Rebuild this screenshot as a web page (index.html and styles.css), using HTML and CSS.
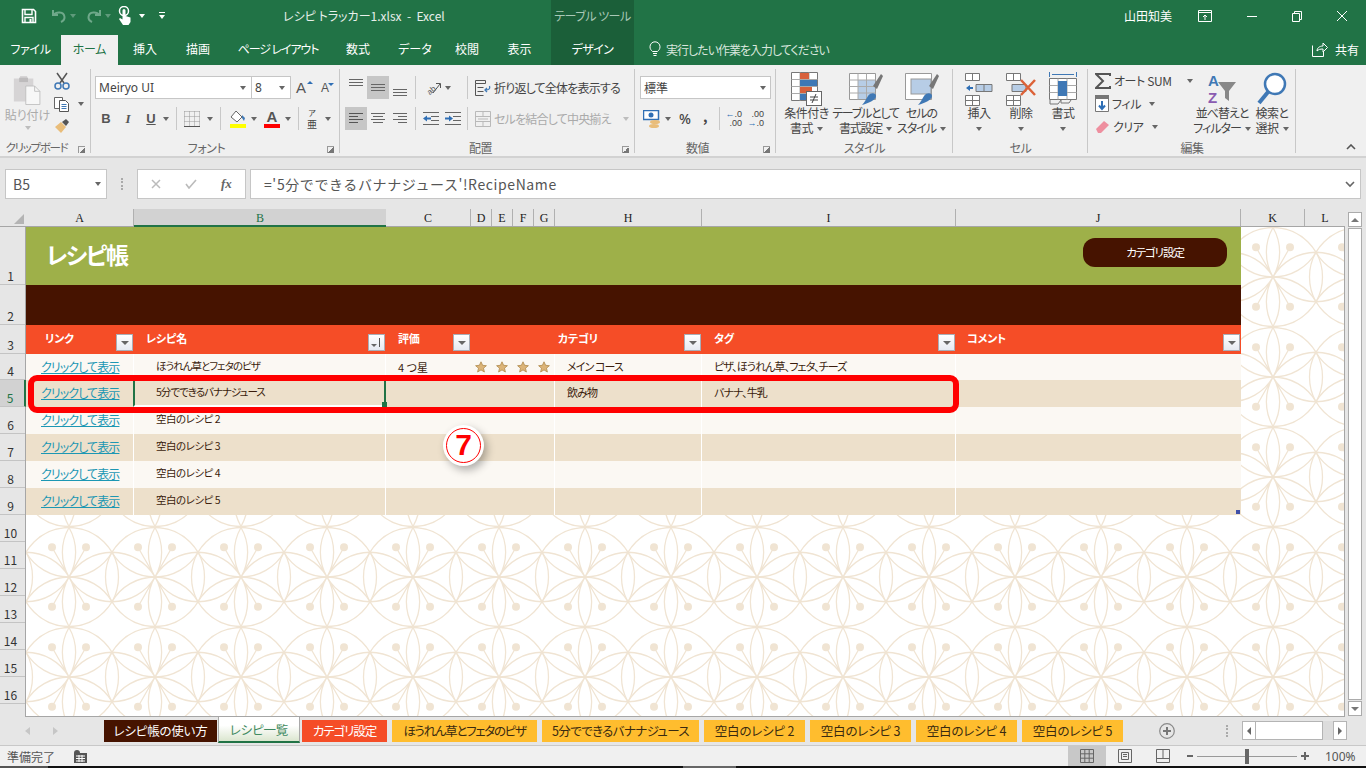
FILE: index.html
```html
<!DOCTYPE html>
<html lang="ja">
	<head>
		<meta charset="UTF-8" />
		<title>レシピ トラッカー1.xlsx - Excel</title>
		<link rel="stylesheet" href="styles.css">
	</head>
	<body>
		<div class="app">
			<div class="title-bar">
				<div class="qat">
					<svg class="qat-save" width="16" height="16" viewBox="0 0 16 16"><path d="M1.500 1.500h11l2 2v11h-13z" fill="none" stroke="#fff" stroke-width="1.600"/><path d="M4 2v4.500h7V2M4 14.500v-5h8v5" fill="none" stroke="#fff" stroke-width="1.400"/><rect x="8.500" y="11" width="2" height="3.500" fill="#fff"/></svg>
					<svg class="qat-undo" width="16" height="16" viewBox="0 0 16 16"><path d="M2 2v5h5M2.500 7C5 3.500 13 3 13.500 9c.2 2.500-1.500 4-3.500 5" fill="none" stroke="#6fa88a" stroke-width="2"/></svg>
					<span class="caret dim"></span>
					<svg class="qat-redo" width="16" height="16" viewBox="0 0 16 16"><path d="M14 2v5H9M13.500 7C11 3.500 3 3 2.500 9c-.2 2.500 1.500 4 3.500 5" fill="none" stroke="#6fa88a" stroke-width="2"/></svg>
					<span class="caret dim"></span>
					<svg class="qat-touch" width="16" height="20" viewBox="0 0 16 20"><circle cx="7" cy="5" r="4.500" fill="none" stroke="#fff" stroke-width="1.500"/><path d="M5.500 4.500a1.500 1.500 0 0 1 3 0V10l5 1.500V16l-2 3H6l-4-6 1-1 2.500 1.500z" fill="#fff"/></svg>
					<span class="caret white"></span>
					<span class="qat-custom"><i></i><span class="caret white"></span></span>
				</div>
				<div class="doc-title">レシピ トラッカー1.xlsx&nbsp; - &nbsp;Excel</div>
				<div class="tool-context">テーブル ツール</div>
				<div class="user-name">山田知美</div>
				<div class="win-buttons">
					<svg width="14" height="14" viewBox="0 0 14 14"><path d="M.5 1.500h13v11H.5zM.5 3.500h13M7 11V6M5 8l2-2 2 2" fill="none" stroke="#fff"/></svg>
					<svg width="12" height="12" viewBox="0 0 12 12"><path d="M1 6.500h10" stroke="#fff"/></svg>
					<svg width="12" height="12" viewBox="0 0 12 12"><path d="M1.500 3.500h7v8h-7zM3.500 3.500v-2h7v8h-2" fill="none" stroke="#fff"/></svg>
					<svg width="12" height="12" viewBox="0 0 12 12"><path d="M1 1l10 10M11 1L1 11" stroke="#fff"/></svg>
				</div>
			</div>

			<div class="tab-bar">
				<span class="tab tab-file">ファイル</span>
				<span class="tab tab-home">ホーム</span>
				<span class="tab tab-ins">挿入</span>
				<span class="tab tab-draw">描画</span>
				<span class="tab tab-page">ページ レイアウト</span>
				<span class="tab tab-num">数式</span>
				<span class="tab tab-data">データ</span>
				<span class="tab tab-rev">校閲</span>
				<span class="tab tab-view">表示</span>
				<span class="tab tab-design">デザイン</span>
				<span class="tell-me">
					<svg width="12" height="16" viewBox="0 0 12 16"><path d="M3.500 10.500C2 9 1 8 1 5.800a5 5 0 0 1 10 0C11 8 10 9 8.500 10.500zM4 12.500h4M4.500 14.500h3" fill="none" stroke="#fff"/></svg>
					実行したい作業を入力してください
				</span>
				<span class="share">
					<svg width="16" height="15" viewBox="0 0 16 15"><path d="M.5 3.500v11h11V10M5 9c0-3 2.500-5 6-5V1l4.500 4.500L11 10V7C8 7 6.500 7.500 5 9z" fill="none" stroke="#fff"/></svg>
					共有
				</span>
			</div>

			<div class="ribbon">
				<section class="group g-clip">
					<div class="group-body">
						<div class="paste">
							<svg width="30" height="30" viewBox="0 0 34 34"><path d="M1 4h7V1h8v3h7v26H1z" fill="#d6d4d5"/><rect x="7" y="3" width="10" height="5" fill="#bdbbbc"/><path d="M14.500 12.500h10l6 6v15h-16z" fill="#f7f7f7" stroke="#bdbdbd"/><path d="M24.500 12.500v6h6" fill="none" stroke="#bdbdbd"/></svg>
							<span class="paste-text">貼り付け</span>
							<span class="caret faint"></span>
						</div>
						<div class="clip-tools">
							<svg width="16" height="18" viewBox="0 0 16 18"><path d="M3 1l7 10M13 1L6 11" stroke="#555" stroke-width="1.500"/><circle cx="4" cy="14" r="3" fill="none" stroke="#3f78b5" stroke-width="1.500"/><circle cx="12" cy="14" r="3" fill="none" stroke="#3f78b5" stroke-width="1.500"/></svg>
							<span class="copy-row">
								<svg width="16" height="16" viewBox="0 0 16 16"><path d="M.5 1.500h8v11h-8z" fill="#fff" stroke="#666"/><path d="M5.500 4.500h6l3 3v8h-9z" fill="#fff" stroke="#555"/><path d="M7.500 8.500h5M7.500 10.500h5M7.500 12.500h5" stroke="#3f78b5"/></svg>
								<span class="caret"></span>
							</span>
							<svg width="16" height="16" viewBox="0 0 16 16"><path d="M1 9l6-5 5 5-5 6z" fill="#e9bd7a"/><path d="M8 4l4-3 3 3-3 4z" fill="#555"/></svg>
						</div>
					</div>
					<div class="group-label">クリップボード</div>
					<span class="launcher"></span>
				</section>

				<section class="group g-font">
					<div class="group-body">
						<div class="tool-row">
							<span class="combo combo-font">Meiryo UI<span class="caret"></span></span>
							<span class="combo combo-size">8<span class="caret"></span></span>
							<span class="font-up">A<i class="mini-tri up"></i></span>
							<span class="font-down">A<i class="mini-tri down"></i></span>
						</div>
						<div class="tool-row row-two">
							<span class="btn w-b bold">B</span>
							<span class="btn w-i ital">I</span>
							<span class="btn w-u under">U</span>
							<span class="caret c-u"></span>
							<span class="vsep s-a"></span>
							<svg class="i-border" width="16" height="16" viewBox="0 0 16 16"><path d="M.5.500h15M.5 5.500h15M.5 10.500h15M.5.500v15M5.500.500v15M10.500.500v15M15.500.500v15" fill="none" stroke="#999" stroke-dasharray="1 1"/><path d="M0 15.500h16" stroke="#555"/></svg>
							<span class="caret c-bd"></span>
							<span class="vsep s-b"></span>
							<svg class="i-fill" width="20" height="18" viewBox="0 0 20 18"><path d="M8 1l6 6-5 5-6-5z" fill="#fff" stroke="#666"/><path d="M14 5l3 3-1 3-2-3z" fill="#3f78b5"/><rect x="2" y="14" width="16" height="4" fill="#ffff00"/></svg>
							<span class="caret c-f"></span>
							<span class="font-color">A<i></i></span>
							<span class="caret c-fc"></span>
							<span class="vsep s-c"></span>
							<span class="phonetic"><small>ア</small><span>亜</span></span>
							<span class="caret c-p"></span>
						</div>
					</div>
					<div class="group-label">フォント</div>
					<span class="launcher"></span>
				</section>

				<section class="group g-align">
					<div class="group-body">
						<div class="tool-row">
							<span class="abtn"><svg class="lines lines-top" width="14" height="8" viewBox="0 0 14 8"><path d="M0 .500h14M0 3.500h14M0 6.500h14" stroke="#666"/></svg></span>
							<span class="abtn on"><svg width="14" height="8" viewBox="0 0 14 8"><path d="M0 .500h14M0 3.500h14M0 6.500h14" stroke="#666"/></svg></span>
							<span class="abtn"><svg class="lines lines-bot" width="14" height="8" viewBox="0 0 14 8"><path d="M0 .500h14M0 3.500h14M0 6.500h14" stroke="#666"/></svg></span>
							<span class="vsep s-d"></span>
							<svg class="i-orient" width="16" height="16" viewBox="0 0 16 16"><text x="1" y="14" transform="rotate(-40 4 11)" class="orient-text">ab</text><path d="M7 13l7-9M10 3.500h4.500V8" fill="none" stroke="#555"/></svg>
							<span class="caret c-o"></span>
							<span class="vsep s-e"></span>
							<span class="wrap-btn">
								<svg width="16" height="16" viewBox="0 0 16 16"><path d="M.5.500h10v3h-10zM.5 3.500v12h8M2.500 7.500h6M2.500 11.500h6" fill="none" stroke="#555"/><path d="M14.500 6c1 3-1 4-4 4M12 8l-2 2 2 2" fill="none" stroke="#3f78b5" stroke-width="1.300"/></svg>
								<span>折り返して全体を表示する</span>
							</span>
						</div>
						<div class="tool-row row-two">
							<span class="abtn on"><svg width="14" height="11" viewBox="0 0 14 11"><path d="M0 .500h14M0 3.500h9M0 6.500h14M0 9.500h9" stroke="#555"/></svg></span>
							<span class="abtn"><svg width="14" height="11" viewBox="0 0 14 11"><path d="M0 .500h14M2 3.500h10M0 6.500h14M2 9.500h10" stroke="#666"/></svg></span>
							<span class="abtn"><svg width="14" height="11" viewBox="0 0 14 11"><path d="M0 .500h14M5 3.500h9M0 6.500h14M5 9.500h9" stroke="#666"/></svg></span>
							<span class="vsep s-d"></span>
							<svg class="i-ind1" width="16" height="13" viewBox="0 0 16 13"><path d="M0 .500h16M8 4.500h8M8 8.500h8M0 12.500h16" stroke="#666"/><path d="M0 6.500l4-3v2h4v2H4v2z" fill="#2f6fb5"/></svg>
							<svg class="i-ind2" width="16" height="13" viewBox="0 0 16 13"><path d="M0 .500h16M8 4.500h8M8 8.500h8M0 12.500h16" stroke="#666"/><path d="M8 6.500l-4-3v2H0v2h4v2z" fill="#2f6fb5"/></svg>
							<span class="vsep s-f"></span>
							<span class="merge-btn">
								<svg width="16" height="16" viewBox="0 0 16 16"><path d="M.5.500h15v15H.5zM.5 5.500h15M.5 10.500h15M8 .500v5M8 10.500v5M3 8h10" fill="none" stroke="#b9b9b9"/></svg>
								<span>セルを結合して中央揃え</span>
								<span class="caret faint"></span>
							</span>
						</div>
					</div>
					<div class="group-label">配置</div>
					<span class="launcher"></span>
				</section>

				<section class="group g-num">
					<div class="group-body">
						<div class="tool-row">
							<span class="combo combo-num">標準<span class="caret"></span></span>
						</div>
						<div class="tool-row row-two">
							<svg class="i-cur" width="18" height="18" viewBox="0 0 18 18"><rect x=".5" y=".5" width="15" height="9" fill="#fff" stroke="#2f6fb5" stroke-width="1.500"/><circle cx="8" cy="5" r="2.500" fill="#2f6fb5"/><ellipse cx="12" cy="12" rx="5" ry="2" fill="#e9bd7a"/><ellipse cx="11" cy="16" rx="5" ry="2" fill="#e9bd7a"/></svg>
							<span class="caret c-n"></span>
							<span class="percent">%</span>
							<span class="comma">,</span>
							<span class="vsep s-g"></span>
							<span class="dec"><b>←</b>.0<br>.00</span>
							<span class="dec dec-b">.00<br><b>→</b>.0</span>
						</div>
					</div>
					<div class="group-label">数値</div>
					<span class="launcher"></span>
				</section>

				<section class="group g-style">
					<div class="group-body big-row">
						<div class="big b-cond">
							<svg width="32" height="34" viewBox="0 0 32 34"><path d="M.5.500h26v28H.5z" fill="#fff" stroke="#777"/><path d="M9 .5v28M18 .5v28M.5 7.500h26M.5 14.500h26M.5 21.500h26" stroke="#aaa"/><rect x="9" y="1" width="9" height="6" fill="#d8613c"/><rect x="9" y="8" width="17" height="6" fill="#3f78b5"/><rect x="9" y="15" width="12" height="6" fill="#d8613c"/><rect x="9" y="22" width="6" height="6" fill="#3f78b5"/><rect x="15.500" y="19.500" width="15" height="14" fill="#fff" stroke="#666"/><path d="M19 25h8M19 28h8M25 22l-4 9" stroke="#444"/></svg>
							<span>条件付き<br>書式<i class="caret"></i></span>
						</div>
						<div class="big b-table">
							<svg width="34" height="34" viewBox="0 0 34 34"><path d="M.5 1.500h26v26H.5z" fill="#fff" stroke="#999"/><rect x="9" y="8" width="17" height="19" fill="#b7cde6"/><path d="M9 1.500v26M17.500 1.500v26M.5 8h26M.5 14.500h26M.5 21h26" stroke="#aaa"/><path d="M24 14l8-12 2 2-6 13z" fill="#777"/><path d="M19 24c3-4 8-3 8 0 0 4-7 7-14 9 3-3 4-6 6-9z" fill="#3f78b5"/></svg>
							<span>テーブルとして<br>書式設定<i class="caret"></i></span>
						</div>
						<div class="big b-cell">
							<svg width="34" height="34" viewBox="0 0 34 34"><path d="M.5 1.500h26v26H.5z" fill="#fff" stroke="#999"/><rect x="6" y="7" width="20" height="15" fill="#b7cde6" stroke="#999"/><path d="M24 14l8-12 2 2-6 13z" fill="#777"/><path d="M19 24c3-4 8-3 8 0 0 4-7 7-14 9 3-3 4-6 6-9z" fill="#3f78b5"/></svg>
							<span>セルの<br>スタイル<i class="caret"></i></span>
						</div>
					</div>
					<div class="group-label">スタイル</div>
				</section>

				<section class="group g-cells">
					<div class="group-body big-row">
						<div class="big b-ins">
							<svg width="28" height="34" viewBox="0 0 28 34"><path d="M.5 1.500h14v7H.5zM7.500 1.500v7M.5 23.500h14v10H.5zM7.500 23.500v10M.5 28.500h14" fill="#fff" stroke="#777"/><path d="M11 12.500h16v7H11z" fill="#b7cde6" stroke="#777"/><path d="M19 12.500v7" stroke="#777"/><path d="M1 16l4-3v2h3v2H5v2z" fill="#2f6fb5"/></svg>
							<span>挿入</span><i class="caret"></i>
						</div>
						<div class="big b-del">
							<svg width="30" height="34" viewBox="0 0 30 34"><path d="M.5 1.500h14v7H.5zM7.500 1.500v7M.5 23.500h14v10H.5zM7.500 23.500v10M.5 28.500h14" fill="#fff" stroke="#777"/><path d="M6 12.500h14v7H6z" fill="#b7cde6" stroke="#777"/><path d="M15 8l14 15M29 8L15 23" stroke="#dc6238" stroke-width="2.500"/></svg>
							<span>削除</span><i class="caret"></i>
						</div>
						<div class="big b-fmt">
							<svg width="28" height="34" viewBox="0 0 28 34"><path d="M.5 0v5M27.500 0v5M3 2.500h22" stroke="#3f78b5"/><path d="M.5 6.500h27v21H.5z" fill="#fff" stroke="#777"/><path d="M9 6.500v21M18 6.500v21M.5 13.500h27M.5 20.500h27" stroke="#aaa"/><rect x="9" y="9" width="9" height="15" fill="#3f78b5"/><path d="M1 28v4h8l3-4M12 28v3h8l2-3" fill="none" stroke="#777"/></svg>
							<span>書式</span><i class="caret"></i>
						</div>
					</div>
					<div class="group-label">セル</div>
				</section>

				<section class="group g-edit">
					<div class="group-body big-row">
						<div class="edit-list">
							<span class="edit-item"><svg width="16" height="16" viewBox="0 0 16 16"><path d="M15 3V1H1l7 7-7 7h14v-2" fill="none" stroke="#555" stroke-width="2"/></svg>オート SUM<i class="caret c-sum"></i></span>
							<span class="edit-item"><svg width="14" height="17" viewBox="0 0 14 17"><path d="M.5.500h13v16H.5z" fill="#fff" stroke="#777"/><rect width="14" height="4" fill="#777"/><path d="M7 6v8M4 10.500l3 3.500 3-3.500" fill="none" stroke="#2f6fb5" stroke-width="2"/></svg>フィル<i class="caret"></i></span>
							<span class="edit-item"><svg width="15" height="14" viewBox="0 0 15 14"><path d="M1 9l8-8 5 4-8 8H3z" fill="#ee8f9f"/></svg>クリア<i class="caret"></i></span>
						</div>
						<div class="big b-sort">
							<svg width="30" height="34" viewBox="0 0 30 34"><text x="1" y="13.600" class="sort-a">A</text><text x="1" y="30.500" class="sort-z">Z</text><path d="M11 10h18l-7 9v10l-4-3v-7z" fill="#888"/></svg>
							<span>並べ替えと<br>フィルター<i class="caret"></i></span>
						</div>
						<div class="big b-find">
							<svg width="30" height="34" viewBox="0 0 30 34"><circle cx="18" cy="12" r="10" fill="#fff" stroke="#3f78b5" stroke-width="2.500"/><path d="M11 20L2 31" stroke="#3f78b5" stroke-width="4"/></svg>
							<span>検索と<br>選択<i class="caret"></i></span>
						</div>
					</div>
					<div class="group-label">編集</div>
				</section>

				<div class="ribbon-end">
					<svg width="10" height="6" viewBox="0 0 10 6"><path d="M1 5l4-4 4 4" fill="none" stroke="#555" stroke-width="1.600"/></svg>
				</div>
			</div>

			<div class="formula-bar">
				<div class="name-box">B5<span class="caret"></span></div>
				<div class="grip"></div>
				<div class="fx-box">
					<svg width="10" height="10" viewBox="0 0 10 10"><path d="M1 1l8 8M9 1L1 9" stroke="#bbb" stroke-width="1.500"/></svg>
					<svg width="12" height="10" viewBox="0 0 12 10"><path d="M1 5l3 4 7-8" fill="none" stroke="#bbb" stroke-width="1.600"/></svg>
					<span class="fx">fx</span>
				</div>
				<div class="formula-input">
					<span>='5分でできるバナナジュース'!RecipeName</span>
					<svg width="10" height="7" viewBox="0 0 10 7"><path d="M1 1l4 4 4-4" fill="none" stroke="#666" stroke-width="1.600"/></svg>
				</div>
			</div>

			<div class="grid-area">
				<div class="grid-main">
					<div class="col-heads">
						<div class="corner"><i></i></div>
						<div class="ch ch-a">A</div>
						<div class="ch ch-b sel">B</div>
						<div class="ch ch-c">C</div>
						<div class="ch ch-d">D</div>
						<div class="ch ch-d">E</div>
						<div class="ch ch-d">F</div>
						<div class="ch ch-d">G</div>
						<div class="ch ch-h">H</div>
						<div class="ch ch-i">I</div>
						<div class="ch ch-j">J</div>
						<div class="ch ch-k">K</div>
						<div class="ch ch-l">L</div>
					</div>

					<div class="sheet-wrap">
						<div class="row-heads">
							<div class="rh r1">1</div>
							<div class="rh r2">2</div>
							<div class="rh r3">3</div>
							<div class="rh r4">4</div>
							<div class="rh r5 sel">5</div>
							<div class="rh rn">6</div>
							<div class="rh rn">7</div>
							<div class="rh rn">8</div>
							<div class="rh rn">9</div>
							<div class="rh rn">10</div>
							<div class="rh rn">11</div>
							<div class="rh rn">12</div>
							<div class="rh rn">13</div>
							<div class="rh rn">14</div>
							<div class="rh rn">15</div>
							<div class="rh rn">16</div>
						</div>
						<div class="cells">
							<div class="book">
								<div class="banner">
									<span class="banner-title">レシピ帳</span>
									<span class="banner-btn">カテゴリ設定</span>
								</div>
								<div class="dark-band"></div>
								<div class="t-row t-head">
									<div class="c-link">リンク<span class="filter"></span></div>
									<div class="c-name">レシピ名<span class="filter sorted"></span></div>
									<div class="c-rate">評価<span class="filter f-rate"></span></div>
									<div class="c-cat">カテゴリ<span class="filter"></span></div>
									<div class="c-tag">タグ<span class="filter"></span></div>
									<div class="c-note">コメント<span class="filter"></span></div>
								</div>
								<div class="t-row t-first">
									<div class="c-link"><a>クリックして表示</a></div>
									<div class="c-name">ほうれん草とフェタのピザ</div>
									<div class="c-rate">
										<span>4 つ星</span>
										<span class="stars">
											<svg viewBox="0 0 12 12"><path id="st" d="M6 .8l1.600 3.500 3.800.4-2.900 2.500.9 3.800L6 8.900l-3.400 2.100.9-3.800L.6 4.700l3.800-.4z"/></svg>
											<svg viewBox="0 0 12 12"><use href="#st"/></svg>
											<svg viewBox="0 0 12 12"><use href="#st"/></svg>
											<svg viewBox="0 0 12 12"><use href="#st"/></svg>
										</span>
									</div>
									<div class="c-cat">メイン コース</div>
									<div class="c-tag">ピザ、ほうれん草、フェタ、チーズ</div>
									<div class="c-note"></div>
								</div>
								<div class="t-row alt t-sel">
									<div class="c-link"><a>クリックして表示</a></div>
									<div class="c-name active">5分でできるバナナジュース<i class="handle"></i></div>
									<div class="c-rate"></div>
									<div class="c-cat">飲み物</div>
									<div class="c-tag">バナナ、牛乳</div>
									<div class="c-note"></div>
								</div>
								<div class="t-row">
									<div class="c-link"><a>クリックして表示</a></div>
									<div class="c-name blank">空白のレシピ 2</div>
									<div class="c-rate"></div><div class="c-cat"></div><div class="c-tag"></div><div class="c-note"></div>
								</div>
								<div class="t-row alt">
									<div class="c-link"><a>クリックして表示</a></div>
									<div class="c-name blank">空白のレシピ 3</div>
									<div class="c-rate"></div><div class="c-cat"></div><div class="c-tag"></div><div class="c-note"></div>
								</div>
								<div class="t-row">
									<div class="c-link"><a>クリックして表示</a></div>
									<div class="c-name blank">空白のレシピ 4</div>
									<div class="c-rate"></div><div class="c-cat"></div><div class="c-tag"></div><div class="c-note"></div>
								</div>
								<div class="t-row alt">
									<div class="c-link"><a>クリックして表示</a></div>
									<div class="c-name blank">空白のレシピ 5</div>
									<div class="c-rate"></div><div class="c-cat"></div><div class="c-tag"></div><div class="c-note"><i class="resize"></i></div>
								</div>
							</div>
							<div class="red-mark"></div>
							<div class="badge"><span>7</span></div>
						</div>
					</div>
				</div>
				<div class="v-scroll">
					<span class="sb-btn"><i class="tri-up"></i></span>
					<span class="sb-track"></span>
					<span class="sb-btn"><i class="tri-down"></i></span>
				</div>
			</div>

			<div class="sheet-tabs">
				<span class="nav-arrow left"></span>
				<span class="nav-arrow right"></span>
				<span class="stab s-brown">レシピ帳の使い方</span>
				<span class="stab s-active">レシピ一覧</span>
				<span class="stab s-red">カテゴリ設定</span>
				<span class="stab s-yel w-pizza">ほうれん草とフェタのピザ</span>
				<span class="stab s-yel w-juice">5分でできるバナナジュース</span>
				<span class="stab s-yel w-blank">空白のレシピ 2</span>
				<span class="stab s-yel w-blank">空白のレシピ 3</span>
				<span class="stab s-yel w-blank">空白のレシピ 4</span>
				<span class="stab s-yel w-blank">空白のレシピ 5</span>
				<svg class="add-sheet" width="16" height="16" viewBox="0 0 16 16"><circle cx="8" cy="8" r="7.300" fill="none" stroke="#8a8a8a" stroke-width="1.200"/><path d="M8 4v8M4 8h8" stroke="#777" stroke-width="2"/></svg>
				<span class="tab-grip"></span>
				<div class="h-scroll">
					<span class="hs-btn"><i class="tri-left"></i></span>
					<span class="hs-thumb"></span>
					<span class="hs-track"></span>
					<span class="hs-btn"><i class="tri-right"></i></span>
				</div>
			</div>

			<div class="status-bar">
				<span class="ready">準備完了</span>
				<svg class="macro" width="13" height="13" viewBox="0 0 13 13"><path d="M0 3h13v10H0z" fill="#555"/><circle cx="3" cy="3" r="3" fill="#555"/><path d="M2 6h9M2 8.500h9M2 11h9M5 5v7M8 5v7" stroke="#fff"/></svg>
				<span class="view-btn on"><svg width="14" height="14" viewBox="0 0 14 14"><path d="M.5.500h13v13H.5zM.5 4.800h13M.5 9.200h13M4.800.500v13M9.200.500v13" fill="none" stroke="#666"/></svg></span>
				<span class="view-btn"><svg width="14" height="14" viewBox="0 0 14 14"><path d="M.5.500h13v13H.5zM3.500 3.500h7v7h-7zM5 5.500h4M5 7.500h4" fill="none" stroke="#666"/></svg></span>
				<span class="view-btn"><svg width="14" height="14" viewBox="0 0 14 14"><path d="M.5.500h13v13H.5zM.5 9.500h6.500V.500M7 9.500h6.500" fill="none" stroke="#666"/></svg></span>
				<span class="zoom-minus"></span>
				<span class="zoom-slider"><i></i></span>
				<span class="zoom-plus"></span>
				<span class="zoom-val">100%</span>
			</div>
			<div class="taskbar-edge"></div>
		</div>
	</body>
</html>
```
FILE: styles.css
```css
* {
	box-sizing: border-box;
}
html, body {
	margin: 0;
	padding: 0;
}
body {
	font-family: "Noto Sans CJK JP", "Noto Sans", sans-serif;
	font-feature-settings: "palt";
	font-size: 12px;
	color: #444;
	overflow: hidden;
}
svg {
	display: block;
	flex: none;
}
i {
	font-style: normal;
}
.app {
	width: 1366px;
	height: 768px;
	display: flex;
	flex-direction: column;
	overflow: hidden;
}

/* carets */
.caret {
	display: inline-block;
	flex: none;
	width: 0;
	height: 0;
	border-left: 3.5px solid transparent;
	border-right: 3.5px solid transparent;
	border-top: 4px solid #666;
}
.caret.white { border-top-color: #fff; }
.caret.dim { border-top-color: #5f9a7b; }
.caret.faint { border-top-color: #bdbdbd; }

/* title bar */
.title-bar {
	height: 35px;
	background: #217346;
	display: flex;
	color: #fff;
}
.qat {
	width: 283px;
	height: 31px;
	display: flex;
	align-items: center;
	padding-left: 21px;
}
.qat-undo { margin-left: 14px; }
.qat .caret { margin-left: 3px; }
.qat-redo { margin-left: 10px; }
.qat-touch { margin-left: 6px; }
.qat-touch + .caret { margin-left: 6px; }
.qat-custom {
	margin-left: 14px;
	display: flex;
	flex-direction: column;
	align-items: center;
	gap: 2px;
}
.qat-custom i {
	width: 6px;
	height: 1px;
	background: #fff;
}
.qat-custom .caret { margin: 0; }
.doc-title {
	width: 268px;
	font-size: 12px;
	line-height: 31px;
	white-space: nowrap;
	color: #e8f0eb;
}
.tool-context {
	width: 83px;
	background: #1b5f39;
	font-size: 12px;
	line-height: 31px;
	text-align: center;
	letter-spacing: -.5px;
	color: #a9c8b6;
}
.user-name {
	margin-left: 490px;
	width: 66px;
	font-size: 12px;
	line-height: 31px;
}
.win-buttons {
	height: 31px;
	display: flex;
	align-items: center;
	gap: 33px;
	margin-left: 8px;
}
.win-buttons svg:nth-child(2) { margin-left: 1px; }

/* tab row */
.tab-bar {
	height: 30px;
	background: #217346;
	display: flex;
	align-items: center;
	color: #fff;
	position: relative;
	font-size: 12px;
}
.tab {
	display: block;
	height: 30px;
	line-height: 28px;
	text-align: center;
	white-space: nowrap;
}
.tab-file { width: 61px; letter-spacing: -.3px; }
.tab-home { width: 57px; background: #f0f0f0; color: #217346; letter-spacing: -.3px; }
.tab-ins { width: 54px; }
.tab-draw { width: 52px; }
.tab-page { width: 108px; letter-spacing: -1.1px; }
.tab-num { width: 52px; }
.tab-data { width: 62px; }
.tab-rev { width: 42px; }
.tab-view { width: 63px; }
.tab-design { width: 83px; background: #1b5f39; letter-spacing: -.6px; }
.tell-me {
	margin-left: 15px;
	display: flex;
	align-items: center;
	gap: 5px;
	width: 663px;
	margin-top: -2px;
	letter-spacing: -1px;
	color: #d8e6dd;
}
.share {
	display: flex;
	align-items: center;
	gap: 7px;
	margin-top: -2px;
}

/* ribbon */
.ribbon {
	height: 93px;
	background: #f0f0f0;
	display: flex;
	border-bottom: 2px solid #d2d2d2;
}
.group {
	position: relative;
	display: flex;
	flex-direction: column;
	flex: none;
}
.group::after {
	content: "";
	position: absolute;
	right: 0;
	top: 4px;
	bottom: 3px;
	width: 1px;
	background: #c8c8c8;
}
.group-body {
	height: 75px;
	padding-top: 11px;
}
.group-label {
	text-align: center;
	font-size: 12px;
	line-height: 17px;
	letter-spacing: -.4px;
	color: #666;
}
.launcher {
	position: absolute;
	right: 6px;
	bottom: 3px;
	width: 7px;
	height: 7px;
	border-left: 1px solid #999;
	border-top: 1px solid #999;
	background: linear-gradient(135deg, transparent 50%, #777 50%);
}
.g-clip { width: 91px; }
.g-clip .group-label { padding-right: 18px; font-size: 11.5px; letter-spacing: -1.3px; }
.g-font { width: 249px; }
.g-font .group-label { padding-right: 18px; }
.g-align { width: 295px; }
.g-align .group-label { padding-right: 14px; }
.g-num { width: 141px; }
.g-num .group-label { padding-right: 16px; }
.g-style { width: 177px; }
.g-cells { width: 135px; }
.g-edit { width: 208px; }
.tool-row {
	display: flex;
	align-items: center;
	height: 23px;
}
.row-two {
	margin-top: 8px;
}
.vsep {
	flex: none;
	width: 1px;
	height: 23px;
	background: #c8c8c8;
}

/* clipboard */
.g-clip .group-body {
	display: flex;
	padding-top: 10px;
}
.paste {
	width: 54px;
	display: flex;
	flex-direction: column;
	align-items: center;
	padding-left: 1px;
}
.paste-text {
	margin-top: 1px;
	color: #aaa;
	font-size: 12px;
	line-height: 17px;
	white-space: nowrap;
}
.paste .caret { margin-top: 3px; }
.clip-tools {
	display: flex;
	flex-direction: column;
	gap: 6px;
	margin-top: -3px;
}
.copy-row {
	display: flex;
	align-items: center;
	gap: 8px;
}

/* font group */
.g-font .group-body { padding-left: 4px; }
.combo {
	height: 23px;
	background: #fff;
	border: 1px solid #c6c6c6;
	display: flex;
	align-items: center;
	justify-content: space-between;
	padding: 0 5px 0 3px;
	font-size: 12px;
	color: #444;
	flex: none;
}
.combo-font { width: 157px; font-family: "Noto Sans", sans-serif; }
.combo-size { width: 40px; margin-left: -1px; font-family: "Noto Sans", sans-serif; }
.font-up, .font-down {
	position: relative;
	color: #555;
	font-family: "Liberation Sans", sans-serif;
}
.font-up { font-size: 15px; margin-left: 5px; width: 18px; }
.font-down { font-size: 12px; margin-left: 7px; }
.mini-tri {
	position: absolute;
	top: 2px;
	right: -5px;
	border-left: 3px solid transparent;
	border-right: 3px solid transparent;
}
.mini-tri.up { right: 1px; border-bottom: 3px solid #2f6fb5; }
.mini-tri.down { border-top: 3px solid #2f6fb5; }
.btn {
	flex: none;
	font-family: "Liberation Sans", sans-serif;
	font-size: 13px;
	color: #555;
	text-align: center;
}
.w-b { margin-left: 4px; width: 14px; font-weight: bold; }
.w-i { margin-left: 8px; width: 14px; font-style: italic; font-family: "Liberation Serif", serif; font-weight: bold; }
.w-u { margin-left: 9px; width: 14px; font-weight: bold; text-decoration: underline; }
.c-u { margin-left: 5px; }
.s-a { margin-left: 7px; }
.i-border { margin-left: 7px; }
.c-bd { margin-left: 7px; }
.s-b { margin-left: 7px; }
.i-fill { margin-left: 7px; }
.c-f { margin-left: 3px; }
.font-color {
	margin-left: 7px;
	width: 16px;
	font-family: "Liberation Sans", sans-serif;
	font-size: 15px;
	font-weight: bold;
	color: #555;
	text-align: center;
	line-height: 15px;
	display: flex;
	flex-direction: column;
}
.font-color i {
	height: 4px;
	background: #f00;
	margin-top: 0;
}
.c-fc { margin-left: 5px; }
.s-c { margin-left: 7px; }
.phonetic {
	margin-left: 6px;
	width: 14px;
	display: flex;
	flex-direction: column;
	align-items: center;
	color: #444;
}
.phonetic small { font-size: 8px; line-height: 10px; }
.phonetic span { font-size: 10px; line-height: 11px; }
.c-p { margin-left: 6px; }

/* alignment */
.g-align .group-body { padding-left: 5px; }
.abtn {
	flex: none;
	width: 22px;
	height: 23px;
	display: flex;
	align-items: center;
	justify-content: center;
}
.abtn.on { background: #c6c6c6; }
.lines-top { margin-top: -10px; }
.lines-bot { margin-top: 10px; }
.s-d { margin-left: 4px; }
.i-orient { margin-left: 10px; overflow: visible; }
.orient-text {
	font-family: "Liberation Sans", sans-serif;
	font-size: 8px;
	fill: #555;
}
.c-o { margin-left: 3px; }
.s-e { margin-left: 16px; }
.wrap-btn, .merge-btn {
	display: flex;
	align-items: center;
	gap: 3px;
	margin-left: 7px;
	white-space: nowrap;
	color: #444;
	letter-spacing: -.8px;
}
.merge-btn {
	color: #aaa;
}
.merge-btn .caret { margin-left: 9px; }
.i-ind1 { margin-left: 7px; }
.i-ind2 { margin-left: 6px; }
.s-f { margin-left: 6px; }

/* number */
.g-num .group-body { padding-left: 5px; }
.combo-num { width: 131px; padding-right: 4px; }
.i-cur { margin-left: 3px; }
.c-n { margin-left: 4px; }
.percent {
	margin-left: 8px;
	width: 15px;
	font-family: "Noto Sans", sans-serif;
	font-size: 14px;
	font-weight: 500;
}
.comma {
	margin-left: 9px;
	width: 10px;
	font-weight: bold;
	font-size: 14px;
	margin-top: -5px;
}
.s-g { margin-left: 6px; }
.dec {
	margin-left: 4px;
	width: 18px;
	font-family: "Liberation Sans", sans-serif;
	font-size: 9px;
	line-height: 9px;
	text-align: right;
	white-space: nowrap;
}
.dec-b { margin-left: 4px; }
.dec b {
	color: #2f6fb5;
}

/* big buttons */
.big-row {
	display: flex;
	padding-top: 7px;
}
.big {
	flex: none;
	display: flex;
	flex-direction: column;
	align-items: center;
	text-align: center;
	font-size: 12px;
	line-height: 15px;
	letter-spacing: -.5px;
	color: #444;
	white-space: nowrap;
}
.big span { margin-top: -1px; }
.big span .caret { margin: 0 0 2px 4px; vertical-align: middle; }
.big > .caret { margin-top: 7px; }
.b-cond { width: 59px; margin-left: 1px; }
.b-table { width: 59px; letter-spacing: -1.2px; }
.b-cell { width: 53px; letter-spacing: -1px; }
.b-ins { width: 42px; margin-left: 5px; }
.b-del { width: 42px; }
.b-fmt { width: 42px; }
.edit-list {
	width: 106px;
	padding-left: 7px;
	display: flex;
	flex-direction: column;
	gap: 6px;
	letter-spacing: -.4px;
}
.edit-item {
	display: flex;
	align-items: center;
	gap: 3px;
	height: 17px;
	white-space: nowrap;
}
.edit-item .caret { margin-left: 5px; }
.edit-item .c-sum { margin-left: 12px; }
.b-sort { width: 56px; letter-spacing: -1px; }
.b-find { width: 40px; margin-left: 2px; }
.sort-a, .sort-z {
	font-family: "Liberation Sans", sans-serif;
	font-size: 15px;
	font-weight: bold;
}
.sort-a { fill: #3f78b5; }
.sort-z { fill: #8a5bb0; }
.ribbon-end {
	flex: 1;
	display: flex;
	align-items: flex-end;
	justify-content: flex-end;
	padding: 0 10px 6px 0;
}

/* formula bar */
.formula-bar {
	height: 51px;
	background: #e6e6e6;
	display: flex;
	align-items: flex-start;
	padding: 11px 5px 0;
}
.name-box {
	width: 102px;
	height: 30px;
	background: #fff;
	border: 1px solid #c6c6c6;
	display: flex;
	align-items: center;
	justify-content: space-between;
	padding: 0 5px 0 7px;
	font-size: 14px;
	color: #555;
}
.grip {
	width: 2px;
	height: 12px;
	margin: 9px 14px 0;
	border-left: 2px dotted #aaa;
}
.fx-box {
	width: 109px;
	height: 30px;
	background: #fff;
	border: 1px solid #c6c6c6;
	display: flex;
	align-items: center;
	padding-left: 13px;
	gap: 24px;
}
.fx {
	font-family: "Liberation Serif", serif;
	font-style: italic;
	font-size: 13px;
	font-weight: bold;
	color: #666;
}
.formula-input {
	margin-left: 4px;
	width: 1111px;
	height: 30px;
	background: #fff;
	border: 1px solid #c6c6c6;
	display: flex;
	align-items: center;
	justify-content: space-between;
	padding: 0 5px 0 13px;
	font-size: 14px;
	color: #555;
	font-feature-settings: normal;
	letter-spacing: .6px;
}

/* column heads */
.grid-area {
	height: 508px;
	display: flex;
	background: #e6e6e6;
}
.grid-main {
	width: 1345px;
	flex: none;
}
.col-heads {
	height: 18px;
	display: flex;
	border-bottom: 1px solid #a6a6a6;
	font-family: "Liberation Serif", serif;
	font-size: 12px;
	color: #222;
}
.corner {
	width: 26px;
	position: relative;
}
.corner i {
	position: absolute;
	right: 2px;
	bottom: 2px;
	width: 0;
	height: 0;
	border-left: 10px solid transparent;
	border-bottom: 10px solid #b4b4b4;
}
.ch {
	flex: none;
	text-align: center;
	line-height: 18px;
	border-right: 1px solid #b0b0b0;
	height: 17px;
}
.ch.sel {
	background: #d2d2d2;
	border-bottom: 2px solid #217346;
	color: #217346;
	height: 18px;
	border-right: 0;
}
.ch-a { width: 108px; }
.ch-b { width: 252px; }
.ch-c { width: 85px; }
.ch-d { width: 21px; }
.ch-h { width: 147px; }
.ch-i { width: 254px; }
.ch-j { width: 285px; }
.ch-k { width: 64px; }
.ch-l { width: 40px; border-right: 0; }

/* sheet */
.sheet-wrap {
	height: 490px;
	display: flex;
	overflow: hidden;
}
.row-heads {
	width: 26px;
	flex: none;
	background: #e6e6e6;
	border-right: 1px solid #a6a6a6;
	font-size: 12px;
	color: #333;
}
.rh {
	display: flex;
	align-items: flex-end;
	justify-content: center;
	border-bottom: 1px solid #c4c4c4;
	line-height: 17px;
	padding-right: 4px;
}
.r1 { height: 58px; }
.r2 { height: 40px; }
.r3 { height: 29px; }
.r4 { height: 26px; }
.r5 { height: 27px; }
.rn { height: 27px; }
.rh.sel {
	background: #d2d2d2;
	color: #217346;
	border-right: 2px solid #217346;
	margin-right: -1px;
}
.cells {
	width: 1319px;
	flex: none;
	position: relative;
	border-right: 1px solid #a6a6a6;
	border-bottom: 1px solid #a6a6a6;
	background-color: #fff;
	background-image: url("data:image/svg+xml,%3Csvg xmlns='http://www.w3.org/2000/svg' width='86' height='100' viewBox='0 0 86 100'%3E%3Cg fill='none' stroke='%23f0e4d3' stroke-width='1.300'%3E%3Ccircle cx='43' cy='50' r='49.5'/%3E%3Ccircle cx='-43' cy='50' r='49.5'/%3E%3Ccircle cx='129' cy='50' r='49.5'/%3E%3Cpath d='M43 50A49.5 49.5 0 0 1 43 .5A49.5 49.5 0 0 1 43 50M43 50A49.5 49.5 0 0 1 43 99.5A49.5 49.5 0 0 1 43 50M43 50A49.5 49.5 0 0 1 86 25.25A49.5 49.5 0 0 1 43 50M43 50A49.5 49.5 0 0 1 86 74.75A49.5 49.5 0 0 1 43 50M43 50A49.5 49.5 0 0 1 0 25.25A49.5 49.5 0 0 1 43 50M43 50A49.5 49.5 0 0 1 0 74.75A49.5 49.5 0 0 1 43 50M43 50L26 20.3M43 50L60 20.3M43 50L26 79.7M43 50L60 79.7'/%3E%3C/g%3E%3Cg fill='%23f0e4d3'%3E%3Ccircle cx='26' cy='20.3' r='4'/%3E%3Ccircle cx='60' cy='20.3' r='4'/%3E%3Ccircle cx='26' cy='79.7' r='4'/%3E%3Ccircle cx='60' cy='79.7' r='4'/%3E%3C/g%3E%3C/svg%3E");
}
.book {
	width: 1215px;
}
.banner {
	height: 58px;
	background: #9eb049;
	display: flex;
	align-items: center;
	justify-content: space-between;
	padding: 0 14px 0 20px;
	color: #fff;
}
.banner-title {
	font-size: 23px;
	font-weight: bold;
	letter-spacing: -1.5px;
	margin-top: -4px;
}
.banner-btn {
	width: 144px;
	height: 29px;
	margin-top: -8px;
	border-radius: 12px;
	background: #461300;
	text-align: center;
	line-height: 28px;
	font-size: 11.5px;
	letter-spacing: -1.1px;
}
.dark-band {
	height: 40px;
	background: #461300;
}
.t-row {
	height: 27px;
	display: flex;
	background: #fbf8f3;
	color: #3a1c0c;
	font-size: 11px;
	line-height: 24px;
}
.t-row > div {
	flex: none;
	position: relative;
	border-right: 1px solid #fff;
	white-space: nowrap;
}
.t-row.alt { background: #ede0cb; }
.t-first { height: 26px; }
.c-link { width: 108px; padding-left: 15px; }
.c-link a {
	color: #1c97b3;
	font-size: 12px;
	letter-spacing: -.9px;
	text-decoration: underline;
	line-height: 26px;
}
.c-name { width: 252px; padding-left: 22px; font-size: 10.5px; letter-spacing: -1px; }
.c-name.blank { letter-spacing: -.5px; }
.c-rate {
	width: 169px;
	padding-left: 12px;
	display: flex;
	align-items: center;
}
.c-cat { width: 147px; padding-left: 12px; letter-spacing: -.9px; }
.c-tag { width: 254px; padding-left: 12px; letter-spacing: -.9px; }
.c-note { width: 285px; padding-left: 11px; border-right: 0 !important; }
.stars {
	margin-left: 47px;
	display: flex;
	gap: 9px;
}
.stars svg {
	width: 12px;
	height: 12px;
	fill: #dcb478;
	stroke: #b08a4c;
	stroke-width: .8;
}
.t-head {
	height: 29px;
	background: #f54d27;
	color: #fff;
	font-weight: bold;
	font-size: 11px;
	line-height: 26px;
	letter-spacing: 0;
}
.t-head > div { border-right: 0; letter-spacing: -.2px; font-size: 11px; }
.t-head .c-link { padding-left: 19px; }
.t-head .c-name { padding-left: 12px; }
.t-head .c-rate { display: block; padding-left: 12px; }
.t-head .c-cat { padding-left: 3px; }
.filter {
	position: absolute;
	right: 1px;
	top: 9px;
	width: 17px;
	height: 17px;
	background: linear-gradient(#fff, #e6e9f1);
	border: 1px solid #a9aeb8;
}
.filter::after {
	content: "";
	position: absolute;
	left: 4px;
	top: 6px;
	border-left: 4px solid transparent;
	border-right: 4px solid transparent;
	border-top: 4px solid #666;
}
.filter.sorted::after {
	left: 2px;
	top: 9px;
	border-width: 3px 3px 0;
}
.filter.sorted::before {
	content: "";
	position: absolute;
	right: 4px;
	top: 3px;
	width: 1px;
	height: 9px;
	background: #555;
}
.f-rate { right: 85px; }
.t-sel .active {
	border-left: 2px solid #217346;
	border-right: 2px solid #217346;
	border-bottom: 2px solid #fff;
	margin-left: -1px;
	width: 253px;
	padding-left: 21px;
}
.handle {
	position: absolute;
	right: -3px;
	bottom: -2px;
	width: 5px;
	height: 5px;
	background: #217346;
}
.resize {
	position: absolute;
	right: 1px;
	bottom: 1px;
	width: 4px;
	height: 4px;
	background: #3f4fa8;
}
.red-mark {
	position: absolute;
	left: 2px;
	top: 148px;
	width: 931px;
	height: 38px;
	border: 6.5px solid #f00;
	border-radius: 9px;
}
.badge {
	position: absolute;
	left: 417px;
	top: 198px;
	width: 41px;
	height: 41px;
	border-radius: 50%;
	background: #fff;
	box-shadow: 3px 4px 8px rgba(0, 0, 0, .3);
	display: flex;
	align-items: center;
	justify-content: center;
}
.badge span {
	width: 35px;
	height: 35px;
	border: 1.5px solid #f00;
	border-radius: 50%;
	color: #f00;
	font-family: "Liberation Sans", sans-serif;
	font-size: 30px;
	font-weight: bold;
	line-height: 32px;
	text-align: center;
}

/* scrollbars */
.v-scroll {
	flex: 1;
	padding: 3px 4px 1px 3px;
	display: flex;
	flex-direction: column;
}
.sb-btn {
	height: 15px;
	background: #fff;
	border: 1px solid #ababab;
	display: flex;
	align-items: center;
	justify-content: center;
	flex: none;
}
.sb-track {
	flex: 1;
	background: #fff;
	margin: 1px 0;
	border: 1px solid #ababab;
}
.tri-up, .tri-down, .tri-left, .tri-right {
	width: 0;
	height: 0;
	border: 4px solid transparent;
}
.tri-up { border-bottom-color: #777; border-top-width: 0; }
.tri-down { border-top-color: #777; border-bottom-width: 0; }
.tri-left { border-right-color: #666; border-left-width: 0; }
.tri-right { border-left-color: #666; border-right-width: 0; }

/* sheet tabs */
.sheet-tabs {
	height: 29px;
	background: #e6e6e6;
	display: flex;
	padding-top: 3px;
	border-bottom: 1px solid #c8c8c8;
	font-size: 12.5px;
}
.nav-arrow {
	width: 0;
	height: 0;
	margin-top: 7px;
	border: 4px solid transparent;
}
.nav-arrow.left { margin-left: 25px; border-right: 5px solid #c6c6c6; border-left: 0; }
.nav-arrow.right { margin-left: 23px; border-left: 5px solid #c6c6c6; border-right: 0; }
.stab {
	height: 22px;
	line-height: 21px;
	text-align: center;
	white-space: nowrap;
	flex: none;
	letter-spacing: -.2px;
}
.s-brown { width: 113px; margin-left: 46px; background: #461300; color: #fff; }
.s-active {
	width: 82px;
	margin-left: 1px;
	margin-top: -3px;
	height: 26px;
	line-height: 26px;
	background: linear-gradient(#fff 35%, #dbe6cf);
	border: 1px solid #a9a9a9;
	border-top: 0;
	border-bottom: 2px solid #217346;
	color: #3f8a60;
}
.s-red { width: 85px; margin-left: 2px; background: #f54d27; color: #fff; letter-spacing: -1.1px; }
.s-yel { margin-left: 5px; background: #ffbd2e; color: #3a2a10; }
.w-pizza { width: 145px; letter-spacing: -1.3px; }
.w-juice { width: 157px; letter-spacing: -.6px; }
.w-blank { width: 101px; }
.add-sheet { margin: 3px 0 0 36px; }
.tab-grip {
	width: 2px;
	height: 12px;
	margin: 5px 0 0 51px;
	border-left: 2px dotted #aaa;
}
.h-scroll {
	margin-left: 14px;
	width: 105px;
	height: 19px;
	margin-top: 1px;
	display: flex;
}
.hs-btn {
	width: 14px;
	flex: none;
	background: #fff;
	border: 1px solid #b4b4b4;
	display: flex;
	align-items: center;
	justify-content: center;
}
.hs-thumb {
	width: 67px;
	background: #fff;
	border: 1px solid #b4b4b4;
	border-left: 0;
}
.hs-track {
	width: 10px;
	background: #dcdcdc;
}

/* status bar */
.status-bar {
	height: 20px;
	background: #f0f0f0;
	display: flex;
	align-items: center;
	font-size: 12px;
	color: #555;
}
.ready { margin-left: 7px; width: 67px; }
.macro { margin-top: 0; }
.view-btn {
	width: 38px;
	height: 20px;
	display: flex;
	align-items: center;
	justify-content: center;
}
.view-btn.on { background: #c8c8c8; margin-left: 981px; }
.zoom-minus {
	margin-left: 5px;
	width: 6px;
	height: 2px;
	background: #666;
}
.zoom-slider {
	position: relative;
	margin-left: 4px;
	width: 100px;
	height: 1px;
	background: #999;
}
.zoom-slider i {
	position: absolute;
	left: 48px;
	top: -7px;
	width: 4px;
	height: 15px;
	background: #666;
}
.zoom-plus {
	position: relative;
	margin-left: 4px;
	width: 8px;
	height: 2px;
	background: #666;
}
.zoom-plus::after {
	content: "";
	position: absolute;
	left: 3px;
	top: -3px;
	width: 2px;
	height: 8px;
	background: #666;
}
.zoom-val {
	margin-left: 16px;
	font-family: "Noto Sans", sans-serif;
	font-size: 12px;
}
.taskbar-edge {
	height: 2px;
	background: linear-gradient(90deg, #555 48px, #111 48px, #111 683px, #666 683px, #666 736px, #111 736px);
}
```
